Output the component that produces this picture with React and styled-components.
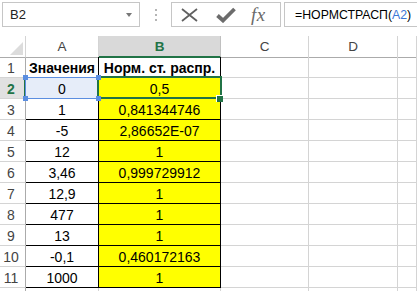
import styled, { createGlobalStyle, css } from "styled-components";

const Global = createGlobalStyle`
  html, body {
    margin: 0;
    padding: 0;
    background: #fff;
    overflow: hidden;
  }
  body {
    font-family: "Liberation Sans", Arial, sans-serif;
    color: #000;
  }
`;

const Page = styled.div`
  width: 417px;
  height: 291px;
  overflow: hidden;
`;

const Bar = styled.div`
  display: flex;
  align-items: flex-start;
  height: 36px;
  padding-top: 2px;
  box-sizing: border-box;
`;

const NameBox = styled.div`
  margin-left: 2px;
  width: 138px;
  height: 25px;
  box-sizing: border-box;
  border: 1px solid #c6c6c6;
  display: flex;
  align-items: center;
  justify-content: space-between;
  padding: 0 7px 0 7px;
  font-size: 13px;
  color: #222;
`;

const Arrow = styled.span`
  width: 0;
  height: 0;
  border-left: 3.5px solid transparent;
  border-right: 3.5px solid transparent;
  border-top: 4px solid #777;
`;

const Grip = styled.div`
  width: 31px;
  height: 25px;
  display: flex;
  flex-direction: column;
  align-items: center;
  justify-content: center;
  gap: 3px;

  span {
    width: 2px;
    height: 2px;
    background: #b5b5b5;
  }
`;

const Buttons = styled.div`
  width: 110px;
  height: 25px;
  box-sizing: border-box;
  border: 1px solid #c6c6c6;
  display: flex;
  align-items: center;
  padding-left: 8px;
  gap: 17px;
  color: #666;
`;

const Fx = styled.span`
  font-family: "Liberation Serif", "Times New Roman", serif;
  font-style: italic;
  font-size: 19px;
  color: #6a6a6a;
  letter-spacing: 0.5px;
  margin-left: -2px;
  line-height: 1;
`;

const FormulaBox = styled.div`
  margin-left: 3px;
  flex: 1;
  min-width: 0;
  height: 25px;
  box-sizing: border-box;
  border: 1px solid #c6c6c6;
  border-right: none;
  display: flex;
  align-items: center;
  padding-left: 10px;
  font-size: 12.3px;
  white-space: nowrap;
`;

const Ref = styled.span`
  color: #3a78d6;
`;

const Sheet = styled.div`
  display: grid;
  grid-template-columns: 26px 73px 122px 88px 89px 1fr;
  grid-auto-rows: 21px;
`;

const Corner = styled.div`
  height: 22px;
  box-sizing: border-box;
  border-right: 1px solid #d4d4d4;
  border-bottom: 1px solid #ababab;
  position: relative;

  &::after {
    content: "";
    position: absolute;
    right: 2px;
    bottom: 2px;
    width: 0;
    height: 0;
    border-left: 13px solid transparent;
    border-bottom: 13px solid #dcdcdc;
  }
`;

const ColHead = styled.div`
  height: 22px;
  box-sizing: border-box;
  border-right: 1px solid #d4d4d4;
  border-bottom: 1px solid #ababab;
  display: flex;
  align-items: flex-end;
  justify-content: center;
  padding-bottom: 3px;
  font-size: 13.5px;
  line-height: 14px;
  color: #444;
  ${(p) =>
    p.$active &&
    css`
      background: #d9d9d9;
      color: #217346;
      font-weight: bold;
      border-bottom: 2px solid #217346;
      padding-bottom: 2px;
      border-right-color: #c0c0c0;
    `}
`;

const RowHead = styled.div`
  box-sizing: border-box;
  border-right: 1px solid #ababab;
  border-bottom: 1px solid #d4d4d4;
  display: flex;
  justify-content: center;
  padding: 2px 3px 0 0;
  font-size: 14px;
  line-height: 18px;
  color: #444;
  ${(p) =>
    p.$active &&
    css`
      background: #e1e1e1;
      color: #217346;
      font-weight: bold;
      border-right: 2px solid #217346;
      padding-right: 2px;
    `}
`;

const Cell = styled.div`
  position: relative;
  box-sizing: border-box;
  border-right: 1px solid ${(p) => (p.$table ? "#000" : "#d4d4d4")};
  border-bottom: 1px solid ${(p) => (p.$table ? "#000" : "#d4d4d4")};
  background: ${(p) => p.$fill || "transparent"};
  display: flex;
  justify-content: center;
  padding-top: 2px;
  font-size: 14px;
  line-height: 18px;
  font-weight: ${(p) => (p.$bold ? "bold" : "normal")};
  white-space: nowrap;

  ${(p) =>
    p.$selected &&
    css`
      &::after {
        content: "";
        position: absolute;
        left: -2px;
        top: -2px;
        right: -2px;
        bottom: -1px;
        border: 2px solid #217346;
        pointer-events: none;
      }
    `}

  ${(p) =>
    p.$reference &&
    css`
      background: #e6edf9;
      &::after {
        content: "";
        position: absolute;
        left: -1px;
        top: -1px;
        right: -1px;
        bottom: -1px;
        border: 1px solid #5b8ee0;
        pointer-events: none;
      }
    `}
`;

const Handle = styled.span`
  position: absolute;
  width: 5px;
  height: 5px;
  background: #5b8ee0;
  z-index: 2;
  ${(p) => (p.$x === "l" ? "left: -3px;" : "right: -3px;")}
  ${(p) => (p.$y === "t" ? "top: -3px;" : "bottom: -3px;")}
`;

const FillHandle = styled.span`
  position: absolute;
  right: -3px;
  bottom: -4px;
  width: 6px;
  height: 6px;
  background: #217346;
  border-left: 1px solid #fff;
  border-top: 1px solid #fff;
  z-index: 3;
`;

const rows = [
  ["Значения", "Норм. ст. распр."],
  ["0", "0,5"],
  ["1", "0,841344746"],
  ["-5", "2,86652E-07"],
  ["12", "1"],
  ["3,46", "0,999729912"],
  ["12,9", "1"],
  ["477", "1"],
  ["13", "1"],
  ["-0,1", "0,460172163"],
  ["1000", "1"],
];

const Cross = () => (
  <svg width="19" height="14" viewBox="0 0 19 14">
    <path d="M2 1 L17 13 M17 1 L2 13" stroke="#606060" strokeWidth="1.8" fill="none" />
  </svg>
);

const Check = () => (
  <svg width="20" height="16" viewBox="0 0 20 16">
    <path d="M1.5 8.5 L7 13.5 L18.5 2" stroke="#6c6c6c" strokeWidth="3.8" fill="none" strokeLinejoin="miter" />
  </svg>
);

export default function App() {
  return (
    <Page>
      <Global />
      <Bar>
        <NameBox>
          B2
          <Arrow />
        </NameBox>
        <Grip>
          <span />
          <span />
          <span />
        </Grip>
        <Buttons>
          <Cross />
          <Check />
          <Fx>fx</Fx>
        </Buttons>
        <FormulaBox>
          =НОРМСТРАСП(<Ref>A2</Ref>)
        </FormulaBox>
      </Bar>
      <Sheet>
        <Corner />
        {["A", "B", "C", "D", "E"].map((c) => (
          <ColHead key={c} $active={c === "B"}>
            {c === "E" ? "" : c}
          </ColHead>
        ))}
        {rows.map((r, i) => {
          const n = i + 1;
          return [
            <RowHead key={`h${n}`} $active={n === 2}>
              {n}
            </RowHead>,
            <Cell key={`a${n}`} $table $bold={n === 1} $reference={n === 2}>
              {r[0]}
              {n === 2 && (
                <>
                  <Handle $x="l" $y="t" />
                  <Handle $x="r" $y="t" />
                  <Handle $x="l" $y="b" />
                  <Handle $x="r" $y="b" />
                </>
              )}
            </Cell>,
            <Cell
              key={`b${n}`}
              $table
              $bold={n === 1}
              $fill={n >= 2 ? "#ffff00" : undefined}
              $selected={n === 2}
            >
              {r[1]}
              {n === 2 && <FillHandle />}
            </Cell>,
            <Cell key={`c${n}`} />,
            <Cell key={`d${n}`} />,
            <Cell key={`e${n}`} />,
          ];
        })}
        <RowHead />
        <Cell />
        <Cell />
        <Cell />
        <Cell />
        <Cell />
      </Sheet>
    </Page>
  );
}
